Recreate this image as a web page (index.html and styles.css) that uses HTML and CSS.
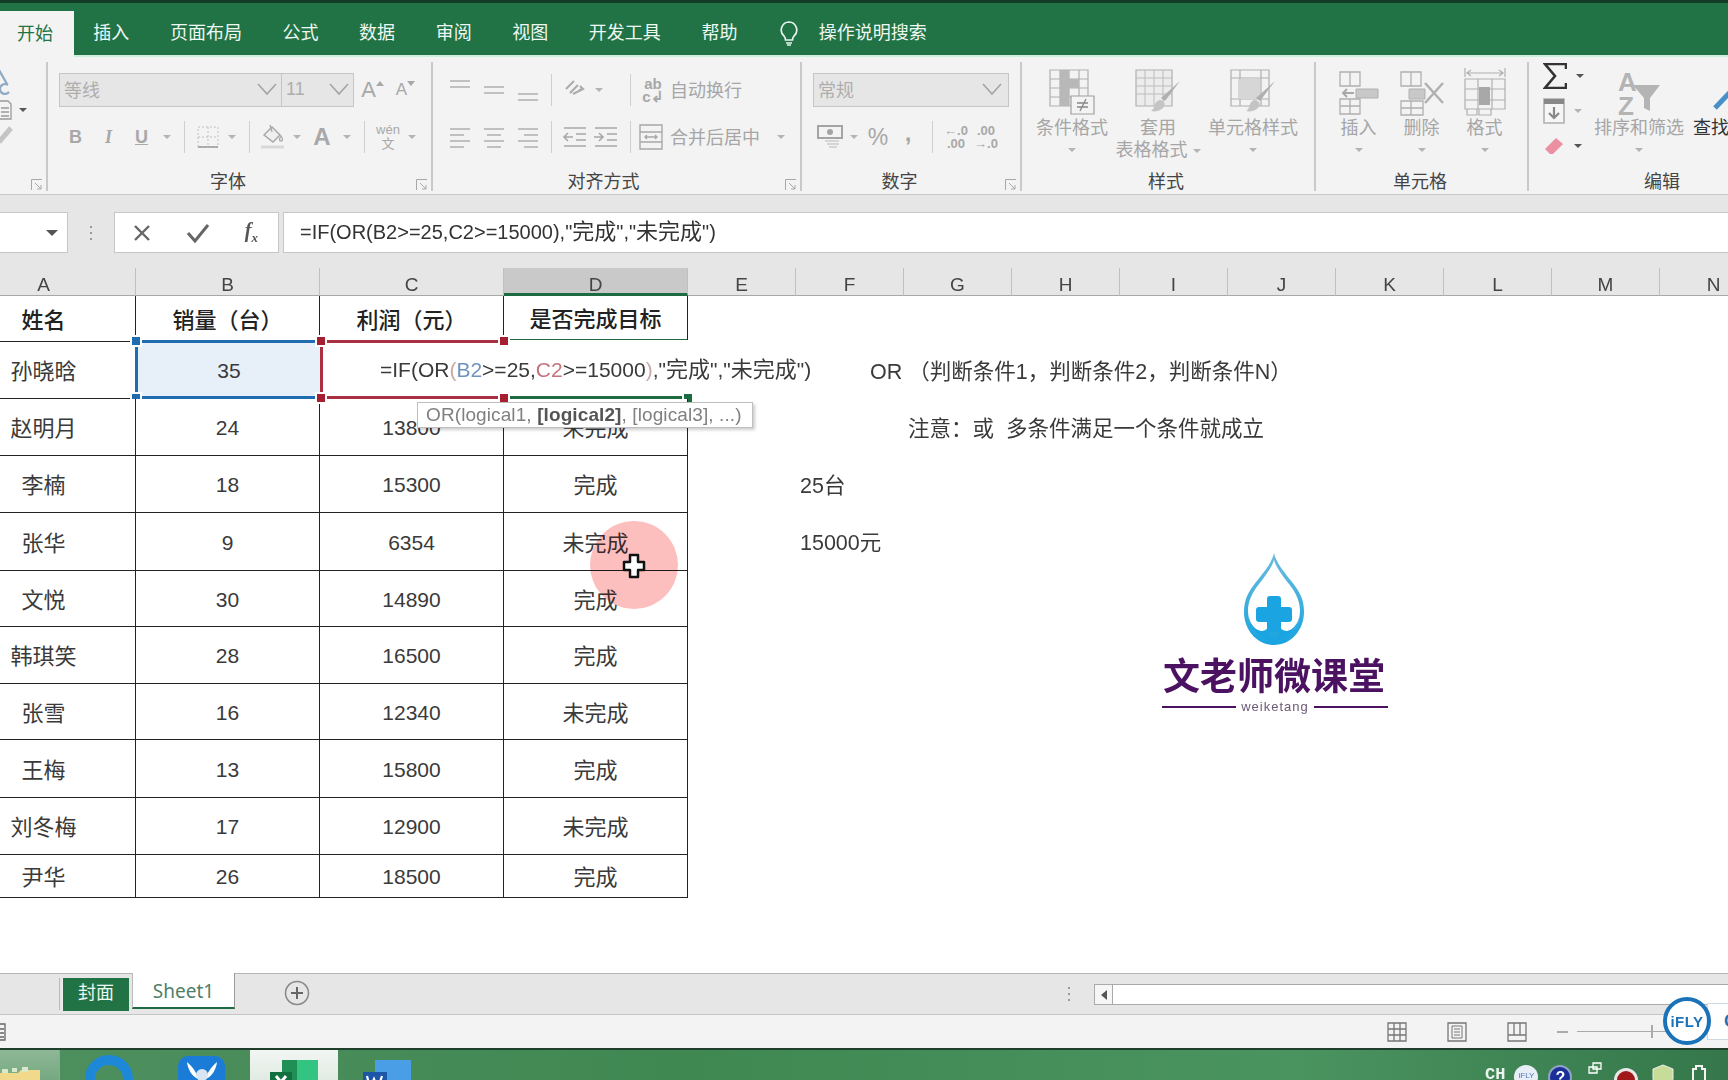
FILE: index.html
```html
<!DOCTYPE html>
<html lang="zh">
<head>
<meta charset="utf-8">
<title>Excel OR</title>
<link rel="stylesheet" href="styles.css">
</head>
<body>
<svg class="defs" width="0" height="0">
  <symbol id="chev" viewBox="0 0 20 12"><path d="M1 1l9 10 9-10" fill="none" stroke="#a4a4a4" stroke-width="1.6"/></symbol>
  <symbol id="al-top" viewBox="0 0 24 24"><path d="M2 3h20M2 9h20" stroke="#b0b0b0" stroke-width="1.6"/></symbol>
  <symbol id="al-mid" viewBox="0 0 24 24"><path d="M2 9h20M2 15h20" stroke="#b0b0b0" stroke-width="1.6"/></symbol>
  <symbol id="al-bot" viewBox="0 0 24 24"><path d="M2 16h20M2 22h20" stroke="#b0b0b0" stroke-width="1.6"/></symbol>
  <symbol id="tx-l" viewBox="0 0 24 24"><path d="M2 4h20M2 10h14M2 16h20M2 22h14" stroke="#b0b0b0" stroke-width="1.5"/></symbol>
  <symbol id="tx-c" viewBox="0 0 24 24"><path d="M2 4h20M5 10h14M2 16h20M5 22h14" stroke="#b0b0b0" stroke-width="1.5"/></symbol>
  <symbol id="tx-r" viewBox="0 0 24 24"><path d="M2 4h20M8 10h14M2 16h20M8 22h14" stroke="#b0b0b0" stroke-width="1.5"/></symbol>
  <symbol id="launch" viewBox="0 0 12 12"><path d="M.5 11V.5H11M4 4l6 6M10 6v4H6" fill="none" stroke="#a8a8a8"/></symbol>
</svg>
<div class="app">
  <header class="tabs">
    <div class="tab tab-on">开始</div>
    <div class="tab">插入</div>
    <div class="tab">页面布局</div>
    <div class="tab">公式</div>
    <div class="tab">数据</div>
    <div class="tab">审阅</div>
    <div class="tab">视图</div>
    <div class="tab">开发工具</div>
    <div class="tab">帮助</div>
    <svg class="bulb" width="20" height="26" viewBox="0 0 20 26"><path d="M10 2a8 8 0 0 0-5 14c1.300 1.200 1.500 2.500 1.500 4h7c0-1.500.2-2.800 1.500-4A8 8 0 0 0 10 2zM7 23h6M8 25h4" fill="none" stroke="#e8f5ee" stroke-width="1.700"/></svg>
    <div class="tab tab-search">操作说明搜索</div>
  </header>

  <section class="ribbon">
    <div class="grp g-clip">
      <div class="clip-col">
        <svg width="20" height="28" viewBox="0 0 20 28"><path d="M0 2l8 14M10 24a5 5 0 1 1-1-7" fill="none" stroke="#8fa9c4" stroke-width="2.200"/></svg>
        <div class="clip-row"><svg width="13" height="20" viewBox="0 0 13 20"><path d="M0 1h9l3 3v15H0M2 8h8M2 12h8M2 16h8" fill="none" stroke="#9a9a9a" stroke-width="1.300"/></svg><span class="car car-d"></span></div>
        <svg width="14" height="22" viewBox="0 0 14 22"><path d="M0 18l12-14" stroke="#c4c4c4" stroke-width="5"/></svg>
      </div>
      <div class="lab-row"><svg class="launch" width="12" height="12"><use href="#launch"/></svg></div>
    </div>

    <div class="grp g-font">
      <div class="body">
        <div class="row">
          <div class="sel sel-font"><span>等线</span><svg width="20" height="12"><use href="#chev"/></svg></div>
          <div class="sel sel-size"><span>11</span><svg width="20" height="12"><use href="#chev"/></svg></div>
          <div class="c w33 ico-a">A<i class="up"></i></div>
          <div class="c w33 ico-a small">A<i class="dn"></i></div>
        </div>
        <div class="row">
          <div class="c w33 gl b">B</div>
          <div class="c w33 gl it">I</div>
          <div class="c w33 gl un">U</div>
          <div class="c w18"><span class="car"></span></div>
          <i class="sep"></i>
          <div class="c w30"><svg width="22" height="22" viewBox="0 0 22 22"><path d="M1 1h20v20H1zM11 1v20M1 11h20" fill="none" stroke="#c0c0c0" stroke-dasharray="2 2"/><path d="M1 21h20" stroke="#999" stroke-width="1.500"/></svg></div>
          <div class="c w18"><span class="car"></span></div>
          <i class="sep"></i>
          <div class="c w30"><svg width="24" height="26" viewBox="0 0 24 26"><path d="M3 11l8-8 8 8-7 7z" fill="#efefef" stroke="#a8a8a8" stroke-width="1.500"/><path d="M9 1l2 7M20 12c2 3 2 5 0 5s-2-2 0-5z" fill="none" stroke="#a8a8a8" stroke-width="1.300"/><path d="M0 23h23" stroke="#d8d8d8" stroke-width="3"/></svg></div>
          <div class="c w18"><span class="car"></span></div>
          <div class="c w32 gl big-a">A</div>
          <div class="c w18"><span class="car"></span></div>
          <i class="sep"></i>
          <div class="c w30 wen"><span>wén</span><span>文</span></div>
          <div class="c w18"><span class="car"></span></div>
        </div>
      </div>
      <div class="lab-row"><span class="lab lab-34">字体</span><svg class="launch" width="12" height="12"><use href="#launch"/></svg></div>
    </div>

    <div class="grp g-align">
      <div class="body">
        <div class="row">
          <div class="c w34"><svg width="24" height="24"><use href="#al-top"/></svg></div>
          <div class="c w34"><svg width="24" height="24"><use href="#al-mid"/></svg></div>
          <div class="c w34"><svg width="24" height="24"><use href="#al-bot"/></svg></div>
          <i class="sep"></i>
          <div class="c w30"><svg width="24" height="24" viewBox="0 0 24 24"><path d="M3 11l8-8M7 15l8-8M10 16l10-5M17 8l3 3-4 1" fill="none" stroke="#ababab" stroke-width="2"/></svg></div>
          <div class="c w18"><span class="car"></span></div>
          <i class="sep sep-l"></i>
          <div class="c w20 ab"><span>ab</span><span>c↲</span></div>
          <div class="txt t-wrap">自动换行</div>
        </div>
        <div class="row">
          <div class="c w34"><svg width="24" height="24"><use href="#tx-l"/></svg></div>
          <div class="c w34"><svg width="24" height="24"><use href="#tx-c"/></svg></div>
          <div class="c w34"><svg width="24" height="24"><use href="#tx-r"/></svg></div>
          <i class="sep"></i>
          <div class="c w30"><svg width="26" height="24" viewBox="0 0 26 24"><path d="M2 3h22M14 9h10M14 15h10M2 21h22M11 12H2M6 8l-4 4 4 4" fill="none" stroke="#a8a8a8" stroke-width="1.600"/></svg></div>
          <div class="c w32"><svg width="26" height="24" viewBox="0 0 26 24"><path d="M2 3h22M14 9h10M14 15h10M2 21h22M1 12h9M6 8l4 4-4 4" fill="none" stroke="#a8a8a8" stroke-width="1.600"/></svg></div>
          <i class="sep sep-m"></i>
          <div class="c w26"><svg width="24" height="26" viewBox="0 0 24 26"><path d="M1 1h22v24H1zM1 8h22M1 18h22M6 13h12M8 11l-2 2 2 2M16 11l2 2-2 2" fill="none" stroke="#a8a8a8" stroke-width="1.400"/></svg></div>
          <div class="txt t-merge">合并后居中</div>
          <div class="c w18"><span class="car"></span></div>
        </div>
      </div>
      <div class="lab-row"><span class="lab lab-34">对齐方式</span><svg class="launch" width="12" height="12"><use href="#launch"/></svg></div>
    </div>

    <div class="grp g-num">
      <div class="body">
        <div class="row">
          <div class="sel sel-num"><span>常规</span><svg width="20" height="12"><use href="#chev"/></svg></div>
        </div>
        <div class="row row-num">
          <div class="c w30"><svg width="26" height="26" viewBox="0 0 26 26"><path d="M1 2h24v12H1z" fill="none" stroke="#a4a4a4" stroke-width="2"/><circle cx="13" cy="8" r="3" fill="#a4a4a4"/><path d="M8 17h14M10 20h12M12 23h8" stroke="#ccc" stroke-width="1.500"/></svg></div>
          <div class="c w18"><span class="car"></span></div>
          <div class="c w30 gl pct">%</div>
          <div class="c w30 gl comma">,</div>
          <i class="sep sep-s"></i>
          <div class="c w30 dec"><span>←.0</span><span>.00</span></div>
          <div class="c w30 dec"><span>.00</span><span>→.0</span></div>
        </div>
      </div>
      <div class="lab-row"><span class="lab lab-34">数字</span><svg class="launch" width="12" height="12"><use href="#launch"/></svg></div>
    </div>

    <div class="grp g-style">
      <div class="bigs">
        <div class="bigb w84">
          <svg width="46" height="50" viewBox="0 0 46 50"><path d="M1 3h38v36H1zM1 12h38M1 21h38M1 30h38M11 3v36M20 3v36M30 3v36" fill="none" stroke="#b0b0b0" stroke-width="1.200"/><path d="M11 3h9v36h-9zM20 12h10v9H20z" fill="#b8b8b8"/><path d="M22 29h23v18H22z" fill="#f3f3f3" stroke="#a0a0a0" stroke-width="1.200"/><path d="M28 36h11M28 40h11M37 32l-6 12" stroke="#888" stroke-width="1.300"/></svg>
          <div class="txt">条件格式</div><span class="car"></span>
        </div>
        <div class="bigb w84 mr5">
          <svg width="46" height="50" viewBox="0 0 46 50"><path d="M1 3h36v36H1z" fill="#ececec" stroke="#b0b0b0" stroke-width="1.200"/><path d="M1 11h36M1 19h36M1 27h36M10 3v36M19 3v36M28 3v36" stroke="#bcbcbc"/><path d="M45 14L30 34l-4-3z" fill="#b0b0b0"/><path d="M25 33c5 1 6 5 3 8-3 3-8 4-12 3 3-2 3-4 4-7 1-2 3-4 5-4z" fill="#c4c4c4"/></svg>
          <div class="txt">套用</div><div class="txt">表格格式<span class="car car-in"></span></div>
        </div>
        <div class="bigb w96">
          <svg width="46" height="50" viewBox="0 0 46 50"><path d="M1 3h38v36H1zM1 11h38M10 3v36M31 3v36M1 32h38" fill="none" stroke="#b0b0b0" stroke-width="1.200"/><path d="M8 12h22v20H8z" fill="#d6d6d6"/><path d="M45 14L30 34l-4-3z" fill="#b0b0b0"/><path d="M25 33c5 1 6 5 3 8-3 3-8 4-12 3 3-2 3-4 4-7 1-2 3-4 5-4z" fill="#c4c4c4"/></svg>
          <div class="txt">单元格样式</div><span class="car"></span>
        </div>
      </div>
      <div class="lab-row"><span class="lab lab-12">样式</span></div>
    </div>

    <div class="grp g-cell">
      <div class="bigs">
        <div class="bigb w63">
          <svg width="42" height="50" viewBox="0 0 42 50"><path d="M2 5h20v14H2zM12 5v14M2 32h20v15H2zM12 32v15M2 39h20" fill="none" stroke="#b0b0b0" stroke-width="1.300"/><path d="M18 19h22v9H18z" fill="#c8c8c8" stroke="#b0b0b0" transform="translate(0 3)"/><path d="M16 26H5M9 22l-4 4 4 4" fill="none" stroke="#a8a8a8" stroke-width="2"/></svg>
          <div class="txt">插入</div><span class="car"></span>
        </div>
        <div class="bigb w63">
          <svg width="46" height="50" viewBox="0 0 46 50"><path d="M2 5h20v14H2zM12 5v14M2 34h22v14H2zM12 34v14M2 41h22" fill="none" stroke="#b0b0b0" stroke-width="1.300"/><path d="M10 22h16v10H10z" fill="#c8c8c8" stroke="#b0b0b0"/><path d="M26 16l18 20M44 16L26 36" stroke="#b0b0b0" stroke-width="2.500"/></svg>
          <div class="txt">删除</div><span class="car"></span>
        </div>
        <div class="bigb w63">
          <svg width="42" height="50" viewBox="0 0 42 50"><path d="M1 1v9M41 1v9M3 6h36M7 3L3 6l4 3M35 3l4 3-4 3" fill="none" stroke="#b0b0b0" stroke-width="1.200"/><path d="M1 12h40v30H1zM14 12v30M28 12v30M1 22h40M1 33h40M3 42v6h10v-6M15 42v6h12v-6" fill="none" stroke="#b0b0b0" stroke-width="1.200"/><path d="M15 20h11v18H15z" fill="#a8a8a8"/></svg>
          <div class="txt">格式</div><span class="car"></span>
        </div>
      </div>
      <div class="lab-row"><span class="lab lab-14">单元格</span></div>
    </div>

    <div class="grp g-edit">
      <div class="bigs">
        <div class="edit-col">
          <div class="edit-row"><svg width="24" height="26" viewBox="0 0 24 26"><path d="M23 6V1H2l10 12L2 25h21v-5" fill="none" stroke="#333" stroke-width="2.600"/></svg><span class="car car-d"></span></div>
          <div class="edit-row"><svg width="22" height="26" viewBox="0 0 22 26"><path d="M1 1h20v24H1z" fill="#f6f6f6" stroke="#b0b0b0" stroke-width="1.600"/><path d="M1 1h20v5H1z" fill="#888"/><path d="M11 9v11M6 15l5 5 5-5" fill="none" stroke="#888" stroke-width="2.200"/></svg><span class="car"></span></div>
          <div class="edit-row"><svg width="22" height="22" viewBox="0 0 22 22"><path d="M2 14L13 3l7 6-10 10H7z" fill="#ec8fa0"/></svg><span class="car car-d"></span></div>
        </div>
        <div class="bigb w100">
          <svg width="48" height="50" viewBox="0 0 48 50"><text x="3" y="24" class="sort">A</text><text x="3" y="48" class="sort">Z</text><path d="M18 18h27L35 31v13l-6-3V31z" fill="#b4b4b4"/></svg>
          <div class="txt">排序和筛选</div><span class="car"></span>
        </div>
        <div class="bigb find">
          <svg width="42" height="50" viewBox="0 0 42 50"><circle cx="32" cy="14" r="9" fill="none" stroke="#4a90c8" stroke-width="3"/><path d="M24 22L6 41" stroke="#4a90c8" stroke-width="5"/></svg>
          <div class="txt dark">查找</div>
        </div>
      </div>
      <div class="lab-row"><span class="lab lab-edit">编辑</span></div>
    </div>
  </section>

  <section class="fbar">
    <div class="namebox"><span class="car car-d big"></span></div>
    <div class="grip"><i></i><i></i><i></i></div>
    <div class="fx-box">
      <svg width="20" height="20" viewBox="0 0 20 20"><path d="M3 3l14 14M17 3L3 17" stroke="#666" stroke-width="2.400"/></svg>
      <svg width="24" height="20" viewBox="0 0 24 20"><path d="M2 10l7 8L22 2" fill="none" stroke="#666" stroke-width="3"/></svg>
      <span class="fx">f<sub>x</sub></span>
    </div>
    <div class="finput">=IF(OR(B2&gt;=25,C2&gt;=15000),"<span class="zh">完成</span>","<span class="zh">未完成</span>")</div>
  </section>

  <main class="sheet">
    <div class="grid">
      <div class="hd">A</div><div class="hd">B</div><div class="hd">C</div><div class="hd hd-on">D</div>
      <div class="hd">E</div><div class="hd">F</div><div class="hd">G</div><div class="hd">H</div><div class="hd">I</div><div class="hd">J</div><div class="hd">K</div><div class="hd">L</div><div class="hd">M</div><div class="hd">N</div>

      <div class="cell th">姓名</div><div class="cell th">销量&#xFF08;台&#xFF09;</div><div class="cell th">利润&#xFF08;元&#xFF09;</div><div class="cell th d1">是否完成目标</div><div class="blank"></div>
      <div class="blank e14"></div>

      <div class="cell">孙晓晗</div>
      <div class="cell b2 num">35<i class="hdl bl tl"></i><i class="hdl bl bl2"></i></div>
      <div class="cell c2"><span class="edit">=IF(OR<b class="soft">(</b><b class="blue">B2</b>&gt;=25,<b class="red">C2</b>&gt;=15000<b class="soft">)</b>,"<span class="zh">完成</span>","<span class="zh">未完成</span>")</span><i class="hdl rd tl"></i><i class="hdl rd bl2"></i><i class="hdl rd tr"></i><i class="hdl rd br"></i></div>
      <div class="cell d2"><i class="hdl gr br"></i></div>
      <div class="blank"></div>
      <div class="note n1">OR &#xFF08;判断条件1&#xFF0C;判断条件2&#xFF0C;判断条件N&#xFF09;</div>
      <div class="blank e8"></div>

      <div class="cell">赵明月</div><div class="cell num">24</div><div class="cell num">13800</div><div class="cell">未完成</div><div class="blank"></div>
      <div class="note n2">注意&#xFF1A;或&nbsp; 多条件满足一个条件就成立</div>
      <div class="blank e8"></div>

      <div class="cell">李楠</div><div class="cell num">18</div><div class="cell num">15300</div><div class="cell">完成</div><div class="blank"></div>
      <div class="note">25台</div>
      <div class="blank e8"></div>

      <div class="cell">张华</div><div class="cell num">9</div><div class="cell num">6354</div><div class="cell">未完成</div><div class="blank"></div>
      <div class="note">15000元</div>
      <div class="blank e8"></div>

      <div class="cell">文悦</div><div class="cell num">30</div><div class="cell num">14890</div><div class="cell">完成</div><div class="blank e10"></div>
      <div class="cell">韩琪笑</div><div class="cell num">28</div><div class="cell num">16500</div><div class="cell">完成</div><div class="blank e10"></div>
      <div class="cell">张雪</div><div class="cell num">16</div><div class="cell num">12340</div><div class="cell">未完成</div><div class="blank e10"></div>
      <div class="cell">王梅</div><div class="cell num">13</div><div class="cell num">15800</div><div class="cell">完成</div><div class="blank e10"></div>
      <div class="cell">刘冬梅</div><div class="cell num">17</div><div class="cell num">12900</div><div class="cell">未完成</div><div class="blank e10"></div>
      <div class="cell">尹华</div><div class="cell num">26</div><div class="cell num">18500</div><div class="cell">完成</div><div class="blank e10"></div>
    </div>

    <div class="tip">OR(logical1, <b>[logical2]</b>, [logical3], ...)</div>
    <div class="spot"></div>
    <svg class="cursor" width="24" height="26" viewBox="0 0 24 26"><path d="M8 2h8v7h6v8h-6v7H8v-7H2V9h6z" fill="#fff" stroke="#111" stroke-width="2.500" stroke-linejoin="round"/></svg>

    <div class="logo">
      <svg width="62" height="94" viewBox="0 0 62 94">
        <defs><linearGradient id="dr" x1="0" y1="0" x2="0" y2="1"><stop offset="0" stop-color="#6cbcdc"/><stop offset="1" stop-color="#18a4e0"/></linearGradient></defs>
        <path d="M31 1C29 10 22 19 13 30 5 40 1 48 1 60c0 18 13 33 30 33s30-15 30-33c0-12-4-20-12-30C40 19 33 10 31 1z" fill="url(#dr)"/>
        <path d="M31 8c-2 7-8 15-15 24C9 41 5 49 5 59c0 9 3 15 9 21 6-1 11-2 11-6h12c0 4 6 5 11 6 6-5 9-12 9-21 0-10-4-18-11-27C39 23 33 15 31 8z" fill="#fff"/>
        <path d="M24 47c0-2 1-3 3-3h8c2 0 3 1 3 3v8h8c2 0 3 1 3 3v9c0 2-1 3-3 3h-8v10H24V70h-8c-2 0-3-1-3-3v-9c0-2 1-3 3-3h8z" fill="#1aa5e2"/>
        <path d="M5 59c0 13 6 24 26 31 20-7 26-18 26-31 0 8-4 16-10 19-5 2-9 1-11 0v7h-10v-7c-2 1-6 2-11 0C9 75 5 67 5 59z" fill="#1aa5e2"/>
      </svg>
      <div class="logo-t">文老师微课堂</div>
      <div class="logo-s"><i></i><span>weiketang</span><i></i></div>
    </div>
  </main>

  <section class="sheetbar">
    <div class="sheets">
      <i class="tb-sep"></i>
      <div class="st st-cover">封面</div>
      <div class="st st-on">Sheet1</div>
      <svg class="plus" width="26" height="26" viewBox="0 0 26 26"><circle cx="13" cy="13" r="11.500" fill="none" stroke="#888" stroke-width="1.500"/><path d="M13 7v12M7 13h12" stroke="#666" stroke-width="2"/></svg>
    </div>
    <div class="grip grip-h"><i></i><i></i><i></i></div>
    <div class="hscroll"><div class="hbtn"><span class="tri"></span></div><div class="htrack"></div></div>
  </section>

  <footer class="status">
    <svg class="st-l" width="6" height="18" viewBox="0 0 6 18"><path d="M-3 1h8v16h-8M0 6h4M0 10h4M0 14h4" fill="none" stroke="#666" stroke-width="1.300"/></svg>
    <div class="views">
      <svg width="20" height="20" viewBox="0 0 20 20"><path d="M1 1h18v18H1zM7 1v18M13 1v18M1 7h18M1 13h18" fill="none" stroke="#777" stroke-width="1.300"/></svg>
      <svg width="20" height="20" viewBox="0 0 20 20"><path d="M1 1h18v18H1z" fill="none" stroke="#777" stroke-width="1.300"/><path d="M5 4h10v12H5zM7 7h6M7 10h6M7 13h6" fill="none" stroke="#777"/></svg>
      <svg width="20" height="20" viewBox="0 0 20 20"><path d="M1 1h18v18H1zM1 13h18M7 1v12M13 1v12" fill="none" stroke="#777" stroke-width="1.300"/></svg>
    </div>
    <div class="zoom"><i class="minus"></i><div class="slider"><i></i></div></div>
  </footer>

  <nav class="task">
    <div class="tk tk-folder"><svg width="40" height="30" viewBox="0 0 40 30"><path d="M0 10h18l3-3h19v30H0z" fill="#f0d98a"/><path d="M2 6h6v4H2zM12 5h5v4h-5zM22 4h6v5h-6z" fill="#d8e8c8"/></svg></div>
    <div class="tk tk-ring"></div>
    <div class="tk tk-app"><svg width="34" height="24" viewBox="0 0 34 24"><path d="M2 2c1 8 5 14 11 17-1-6-5-12-11-17zM32 2c-1 8-5 14-11 17 1-6 5-12 11-17z" fill="#fff"/><circle cx="17" cy="15" r="6" fill="#d8e6f4"/></svg></div>
    <div class="tk tk-xl"><svg width="48" height="30" viewBox="0 0 48 30"><path d="M12 2h15v30H12z" fill="#1f8f55"/><path d="M27 2h21v30H27z" fill="#33c481"/><path d="M0 14h22v20H0z" fill="#107040"/><path d="M6 18l10 12M16 18L6 30" stroke="#fff" stroke-width="3"/></svg></div>
    <div class="tk tk-wd"><svg width="48" height="30" viewBox="0 0 48 30"><path d="M12 2h36v30H12z" fill="#4a9ee6"/><path d="M0 14h24v20H0z" fill="#1d55a8"/><path d="M4 18l3 12 4-9 4 9 4-12" fill="none" stroke="#fff" stroke-width="2.200"/></svg></div>
    <div class="tray">
      <span class="ch">CH</span>
      <span class="dot dot-if">iFLY</span>
      <span class="dot dot-q">?</span>
      <svg class="tw" width="14" height="12" viewBox="0 0 14 12"><path d="M5 1h8v6H5zM1 5h8v6H1z" fill="#4a8a5c" stroke="#fff" stroke-width="1.300"/></svg>
      <span class="dot dot-red"></span>
      <svg class="sh" width="24" height="24" viewBox="0 0 24 24"><path d="M12 1l10 4v9c0 6-5 9-10 10C7 23 2 20 2 14V5z" fill="#c8dc9a" stroke="#eee"/></svg>
      <svg class="bat" width="16" height="22" viewBox="0 0 16 22"><path d="M5 1h6v3h3v18H2V4h3z" fill="none" stroke="#f2f2f2" stroke-width="2"/></svg>
    </div>
  </nav>

  <aside class="ifly"><div class="ifly-c"><span>iFLY</span></div><div class="ifly-p">C</div></aside>
</div>
</body>
</html>
```

FILE: styles.css
```css
* { box-sizing: border-box; }
html, body { margin: 0; padding: 0; width: 1728px; height: 1080px; overflow: hidden; background: #fff; }
body { font-family: "Liberation Sans", "Noto Sans CJK SC", sans-serif; color: #333; }
.defs { position: absolute; }
.app { position: relative; width: 1728px; height: 1080px; overflow: hidden; filter: blur(.45px); display: flex; flex-direction: column; }
i { display: block; font-style: normal; }

/* title tabs */
.tabs { height: 57px; flex: none; background: #217346; border-top: 3px solid #123c26; border-bottom: 2px solid #cdeedd; display: flex; align-items: flex-end; font-size: 18px; color: #eef7f2; padding-left: 0; }
.tab { height: 44px; line-height: 44px; padding: 0 20.300px; white-space: nowrap; }
.tab-on { background: #f3f3f3; color: #217346; width: 74px; padding: 0 0 0 17px; height: 46px; line-height: 46px; margin-bottom: -2px; margin-right: -1px; }
.bulb { margin: 0 0 9px 21px; }
.tab-search { padding-left: 20px; }

/* ribbon */
.ribbon { height: 138px; flex: none; background: #f3f3f3; border-bottom: 1px solid #c6c6c6; display: flex; padding-top: 5px; align-items: flex-start; overflow: hidden; }
.grp { position: relative; flex: none; height: 129px; display: flex; flex-direction: column; border-right: 2px solid #c9c9c9; }
.g-clip { width: 48px; }
.g-font { width: 385px; padding-left: 11px; }
.g-align { width: 369px; padding-left: 8px; }
.g-num { width: 220px; padding-left: 11px; }
.g-style { width: 294px; padding-left: 8px; }
.g-cell { width: 213px; padding-left: 11px; }
.g-edit { width: 200px; border-right: 0; padding-left: 12px; }
.g-align .w34 svg { margin-left: 4px; }
.body { padding-top: 11px; display: flex; flex-direction: column; gap: 13px; flex: 1; }
.row { display: flex; align-items: center; height: 34px; }
.row-num { padding-left: 2px; }
.lab-row { height: 18px; position: relative; display: flex; justify-content: center; align-items: center; flex: none; }
.lab { font-size: 18px; line-height: 18px; color: #444; }
.lab-34 { margin-right: 34px; }
.lab-12 { margin-right: 12px; }
.lab-14 { margin-right: 14px; }
.lab-edit { margin-left: 54px; }
.launch { position: absolute; right: 3px; bottom: 0; }
.clip-col { flex: 1; display: flex; flex-direction: column; gap: 4px; padding-top: 6px; margin-left: -1px; }
.clip-row { display: flex; align-items: center; gap: 7px; }

.c { flex: none; height: 34px; display: flex; align-items: center; justify-content: center; color: #a8a8a8; }
.w18 { width: 18px; } .w20 { width: 20px; } .w26 { width: 26px; } .w30 { width: 30px; } .w32 { width: 32px; } .w33 { width: 33px; } .w34 { width: 34px; }
.gl { font-size: 18px; font-family: "Liberation Sans", sans-serif; }
.b { font-weight: 700; } .it { font-style: italic; font-family: "Liberation Serif", serif; font-weight: 700; } .un { text-decoration: underline; font-weight: 700; }
.big-a { font-size: 24px; font-weight: 700; }
.pct { font-size: 23px; } .comma { font-size: 24px; font-weight: 700; padding-bottom: 8px; }
.ico-a { font-size: 22px; position: relative; align-items: center; }
.ico-a.small { font-size: 17px; }
.ico-a .up, .ico-a .dn { width: 0; height: 0; border-left: 4px solid transparent; border-right: 4px solid transparent; margin-bottom: 14px; }
.ico-a .up { border-bottom: 5px solid #a8a8a8; }
.ico-a .dn { border-top: 5px solid #a8a8a8; }
.car { display: inline-block; width: 0; height: 0; border-left: 4px solid transparent; border-right: 4px solid transparent; border-top: 4px solid #b4b4b4; }
.car-d { border-top-color: #555; }
.car.big { border-left-width: 6px; border-right-width: 6px; border-top-width: 6px; }
.car-in { margin-left: 5px; vertical-align: middle; }
.sep { flex: none; width: 1px; height: 32px; background: #cfcfcf; margin: 0 8px; }
.sep-l { margin-left: 22px; margin-right: 7px; }
.sep-m { margin-left: 8px; margin-right: 7px; }
.sep-s { margin-left: 9px; margin-right: 8px; }
.wen { flex-direction: column; font-size: 13px; line-height: 14px; }
.ab { flex-direction: column; font-size: 15px; line-height: 13px; font-weight: 700; margin: 0 7px 0 5px; }
.dec { flex-direction: column; font-size: 13px; line-height: 13px; font-family: "Liberation Sans", sans-serif; font-weight: 700; }
.txt { font-size: 18px; color: #a6a6a6; white-space: nowrap; line-height: 22px; }
.row .txt { padding-top: 2px; }
.t-merge { margin: 0 12px 0 6px; }
.sel { height: 34px; background: #e6e6e6; border: 1px solid #c6c6c6; display: flex; align-items: center; justify-content: space-between; padding: 0 4px 2px 4px; font-size: 18px; color: #aeaeae; flex: none; }
.sel-font { width: 223px; }
.sel-size { width: 72px; border-left: 0; margin-right: 2px; }
.sel-num { width: 196px; padding-right: 6px; }
.bigs { flex: 1; display: flex; align-items: flex-start; padding-top: 4px; }
.bigb { flex: none; display: flex; flex-direction: column; align-items: center; padding-top: 1px; }
.bigb > .car { margin-top: 9px; }
.w84 { width: 84px; } .w96 { width: 96px; } .w63 { width: 63px; } .w100 { width: 100px; margin-left: -4px; }
.mr5 { margin: 0 5px 0 2px; }
.edit-col { width: 50px; margin: -4px 0 0 2px; flex: none; display: flex; flex-direction: column; gap: 8px; }
.edit-row { display: flex; align-items: center; gap: 9px; height: 27px; }
.sort { font: 700 26px "Liberation Sans", sans-serif; fill: #b4b4b4; }
.find { width: 60px; margin-left: 4px; align-items: flex-start; }
.find svg { margin-left: 16px; }
.dark { color: #333; }

/* formula bar */
.fbar { height: 73px; flex: none; background: #e6e6e6; display: flex; align-items: flex-start; padding-top: 17px; }
.namebox { width: 68px; height: 41px; background: #fff; border: 1px solid #c6c6c6; border-left: 0; display: flex; align-items: center; justify-content: flex-end; padding-right: 9px; }
.grip { width: 46px; height: 41px; display: flex; flex-direction: column; align-items: center; justify-content: center; gap: 4px; }
.grip i { width: 2px; height: 2px; background: #999; }
.fx-box { width: 165px; height: 41px; background: #fff; border: 1px solid #c6c6c6; display: flex; align-items: center; justify-content: space-between; padding: 0 20px 0 17px; color: #555; }
.fx { font: italic 700 20px "Liberation Serif", serif; color: #555; }
.fx sub { font-size: 13px; }
.finput { margin-left: 4px; flex: 1; height: 41px; background: #fff; border-top: 1px solid #c6c6c6; border-bottom: 1px solid #c6c6c6; border-left: 1px solid #c6c6c6; font-size: 20px; line-height: 39px; padding-left: 16px; color: #333; white-space: nowrap; }
.zh { font-size: 22px; line-height: 1; }

/* sheet */
.sheet { position: relative; flex: none; height: 705px; overflow: hidden; background: #fff; }
.grid { display: grid; margin-left: -48px; width: 1900px; grid-template-columns: repeat(4, 184px) repeat(10, 108px); grid-template-rows: 28px 46px 57px 57px 57px 58px 56px 57px 56px 58px 57px 43px; font-size: 22px; }
.hd { background: #e6e6e6; border-bottom: 1px solid #a8a8a8; border-right: 1px solid #c0c0c0; font-size: 19px; line-height: 34px; height: 28px; overflow: hidden; text-align: center; color: #444; }
.hd-on { background: #c9c9c9; border-bottom: 3px solid #1d6b40; }
.cell { position: relative; display: flex; align-items: center; justify-content: center; border-right: 1.500px solid #222; border-bottom: 1.500px solid #222; white-space: nowrap; color: #3a3a3a; background: #fff; padding-bottom: 2px; }
.num { font-size: 21px; padding: 2px 0 0; }
.th { font-weight: 500; color: #222; }
.blank { grid-column: span 1; }
.e14 { grid-column: span 9; }
.e8 { grid-column: span 8; }
.e10 { grid-column: span 10; }
.note { display: flex; align-items: center; white-space: nowrap; font-size: 21.500px; color: #3a3a3a; padding: 0 0 3px 4px; }
.n1 { padding-left: 74px; }
.n2 { padding-left: 112px; }
.d1 { border-bottom: 3px solid #1d6b40; }
.b2 { background: #e7f0f9; border: 0; border-top: 3px solid #1f6cb0; border-bottom: 3px solid #1f6cb0; border-left: 3px solid #1f6cb0; margin-left: -1px; margin-top: -2px; border-right: 0; }
.c2 { border: 0; border-top: 3px solid #a83040; border-bottom: 3px solid #a83040; border-left: 3px solid #a83040; margin-top: -2px; z-index: 2; justify-content: flex-start; background: transparent; padding: 0; }
.d2 { border: 0; border-bottom: 3px solid #1d6b40; margin-top: -2px; }
.edit { padding-left: 57px; font-size: 21px; color: #3a3a3a; }
.edit b { font-weight: 400; }
.blue { color: #6e93bf; } .red { color: #c4737b; } .soft { color: #c9a9a9; }
.hdl { position: absolute; width: 8px; height: 8px; box-shadow: 0 0 0 2px #fff; }
.hdl.bl { background: #1f6cb0; } .hdl.rd { background: #a51f30; } .hdl.gr { background: #1d6b40; }
.tl { left: -6px; top: -6px; } .bl2 { left: -6px; bottom: -6px; }
.tr { right: -4px; top: -6px; } .br { right: -4px; bottom: -6px; }

.tip { position: absolute; left: 417px; top: 134px; width: 336px; height: 26px; background: #fff; border: 1px solid #bfbfbf; box-shadow: 2px 2px 3px rgba(0,0,0,.2); font-size: 19px; line-height: 23px; letter-spacing: .1px; padding-left: 8px; color: #808080; white-space: nowrap; z-index: 3; overflow: hidden; }
.tip b { color: #555; }
.spot { position: absolute; left: 590px; top: 253px; width: 88px; height: 88px; border-radius: 50%; background: rgba(251,150,150,.62); mix-blend-mode: multiply; z-index: 3; }
.cursor { position: absolute; left: 622px; top: 285px; z-index: 4; }

.logo { position: absolute; left: 1158px; top: 284px; width: 232px; display: flex; flex-direction: column; align-items: center; }
.logo-t { font: 700 37px/44px "Noto Sans CJK SC", sans-serif; color: #4b1261; margin-top: 6px; white-space: nowrap; width: 232px; text-align: center; }
.logo-s { display: flex; align-items: center; width: 226px; gap: 5px; margin: 3px 0 0 2px; font-size: 13px; color: #6a5a76; line-height: 16px; letter-spacing: 1px; }
.logo-s i { flex: 1; height: 2px; background: #4b1261; }

/* sheet tabs */
.sheetbar { height: 42px; flex: none; background: #e6e6e6; border-top: 1px solid #b5b5b5; border-bottom: 1px solid #c6c6c6; display: flex; }
.sheets { width: 1044px; display: flex; align-items: flex-start; position: relative; }
.tb-sep { width: 1px; height: 32px; background: #bbb; margin: 4px 2px 0 59px; }
.st { font-size: 18px; white-space: nowrap; }
.st-cover { width: 67px; height: 33px; background: #217346; color: #eef7f2; text-align: center; line-height: 31px; margin-top: 4px; margin-right: 3px; border-left: 1px solid #eee; }
.st-on { width: 103px; height: 36px; background: #fff; border-right: 1px solid #999; border-left: 1px solid #bbb; border-bottom: 2px solid #1d6b40; margin-top: -1px; color: #4f7f68; text-align: center; line-height: 37px; font-size: 19px; font-family: "Noto Sans", sans-serif; }
.plus { margin: 6px 0 0 49px; }
.grip-h { width: 50px; height: 40px; }
.hscroll { flex: 1; display: flex; padding-top: 10px; }
.hbtn { width: 19px; height: 21px; background: #f6f6f6; border: 1px solid #aaa; display: flex; align-items: center; justify-content: center; }
.tri { width: 0; height: 0; border-top: 5px solid transparent; border-bottom: 5px solid transparent; border-right: 6px solid #555; }
.htrack { flex: 1; height: 21px; background: #fff; border-top: 1px solid #aaa; border-bottom: 1px solid #aaa; }

/* status */
.status { height: 33px; flex: none; background: #f3f3f3; display: flex; align-items: center; }
.st-l { flex: none; }
.views { margin-left: 1381px; display: flex; gap: 40px; }
.zoom { margin-left: 30px; display: flex; align-items: center; }
.minus { width: 11px; height: 2px; background: #aaa; }
.slider { margin-left: 9px; width: 100px; height: 1px; background: #aaa; position: relative; }
.slider i { position: absolute; left: 74px; top: -6px; width: 2px; height: 13px; background: #aaa; }

/* task bar */
.task { height: 32px; flex: none; border-top: 2px solid #1f3f2c; background: linear-gradient(90deg, #4f8f5f, #3f8852 40%, #4a9460 75%, #35774a); display: flex; overflow: hidden; }
.tk { flex: none; height: 60px; display: flex; justify-content: center; }
.tk-folder { width: 60px; background: linear-gradient(#8fb896, #5a9a6c); border-right: 1px solid #7fb08c; padding-top: 13px; justify-content: flex-start; }
.tk-ring { width: 48px; height: 48px; border-radius: 50%; border: 10px solid #1e88d8; margin: 5px 0 0 25px; }
.tk-app { width: 47px; height: 50px; margin: 6px 0 0 45px; background: #1a7cd6; border-radius: 10px; padding-top: 4px; }
.tk-xl { width: 88px; margin-left: 25px; background: linear-gradient(#f2f6f3, #cfe0d4); padding-top: 8px; }
.tk-wd { width: 90px; padding-top: 8px; margin-left: 4px; }
.tray { flex: 1; display: flex; align-items: flex-start; position: relative; padding-left: 1053px; gap: 14px; padding-top: 15px; color: #eaf4ee; font-size: 16px; }
.ch { font-family: "Liberation Mono", monospace; font-weight: 700; font-size: 17px; }
.dot { width: 24px; height: 24px; border-radius: 50%; flex: none; text-align: center; font-size: 8px; line-height: 22px; }
.dot-if { background: #e8eef8; color: #4a78b0; margin-left: -5px; }
.dot-q { background: #1a2f98; border: 2px solid #8fa4c4; color: #fff; font-size: 16px; font-weight: 700; margin-left: -4px; }
.tw { margin: -3px 4px 0 2px; flex: none; }
.dot-red { background: #a01818; border: 3px solid #e8e8e8; margin: 3px 0 0 -6px; }
.sh { flex: none; margin-top: -1px; margin-left: -1px; }
.bat { flex: none; margin: 0 0 0 2px; }

.ifly { position: absolute; left: 1663px; top: 997px; display: flex; align-items: center; }
.ifly-c { width: 48px; height: 48px; border-radius: 50%; background: #fff; border: 4px solid #1a72b8; display: flex; align-items: center; justify-content: center; font: 700 15px "Liberation Sans", sans-serif; color: #1a72b8; z-index: 1; letter-spacing: .5px; }
.ifly-p { width: 40px; height: 37px; margin-left: -4px; background: #fff; border: 1px solid #d0d8e0; color: #1a72b8; font-weight: 700; font-size: 18px; line-height: 35px; padding-left: 16px; }
```
